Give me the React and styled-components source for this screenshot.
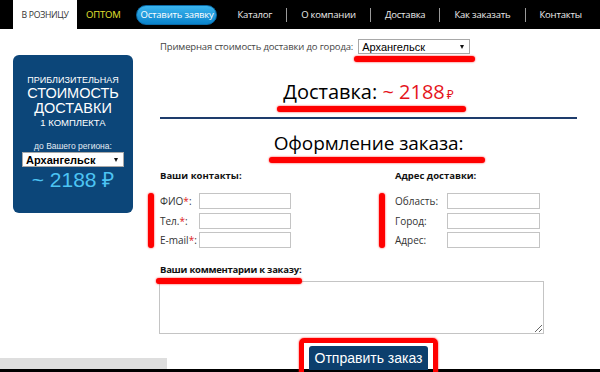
import React from 'react'
import styled, { createGlobalStyle } from 'styled-components'

const GlobalStyle = createGlobalStyle`
  html, body {
    margin: 0;
    padding: 0;
    background: #fff;
    font-family: "Open Sans", "Noto Sans", sans-serif;
    overflow: hidden;
  }
  * { box-sizing: border-box; }
`

const Nav = styled.nav`
  display: flex;
  align-items: center;
  height: 29px;
  padding-left: 13px;
  background: #000;
  font-size: 9.5px;
  letter-spacing: -0.2px;
  color: #ececec;
  white-space: nowrap;
`

const Tab = styled.div`
  align-self: stretch;
  display: flex;
  align-items: center;
  justify-content: center;
  width: 64px;
  background: #fff;
  color: #333;
  font-size: 8.7px;
  letter-spacing: -0.3px;
`

const NavLink = styled.span`
  color: ${p => p.$color || '#ececec'};
  margin-left: ${p => p.$gap || 0}px;
`

const PillButton = styled.span`
  display: flex;
  align-items: center;
  justify-content: center;
  width: 81px;
  height: 20px;
  margin-left: 16px;
  margin-right: 20px;
  border-radius: 10px;
  border: 1px solid #0a6aa6;
  background: linear-gradient(#3bb5ee, #0a83cc);
  color: #fff;
`

const Sep = styled.span`
  width: 1px;
  height: 14px;
  margin: 0 14px;
  background: #9a9a9a;
`

const Content = styled.div`
  display: flex;
  height: 340px;
`

const LeftCol = styled.div`
  display: flex;
  flex-direction: column;
  width: 160px;
  flex: none;
`

const Sidebar = styled.div`
  width: 120px;
  height: 158px;
  margin: 26px 0 0 13px;
  padding: 20px 9px 0;
  border-radius: 6px;
  background: #0c4679;
  color: #fff;
  font-family: "Liberation Sans", Arial, sans-serif;
  text-align: center;
`

const SideLine = styled.div`
  font-size: ${p => p.$size}px;
  line-height: ${p => p.$lh}px;
  margin-top: ${p => p.$mt || 0}px;
  color: ${p => p.$color || '#fff'};
  white-space: nowrap;
`

const Select = styled.div`
  display: flex;
  align-items: center;
  justify-content: space-between;
  height: 15px;
  padding: 0 5px 0 3px;
  background: #fff;
  border: 1px solid #a8a8a8;
  color: #000;
  font-family: "Liberation Sans", Arial, sans-serif;
  font-size: 11px;
  letter-spacing: 0;
  font-weight: ${p => (p.$bold ? 700 : 400)};
  text-align: left;
  position: relative;
  &::after {
    content: '';
    border-left: 2.5px solid transparent;
    border-right: 2.5px solid transparent;
    border-top: 4px solid #111;
  }
`

const GrayBar = styled.div`
  margin-top: auto;
  width: 167px;
  height: 11px;
  background: #dedede;
`

const Main = styled.main`
  width: 417px;
  flex: none;
`

const CityRow = styled.div`
  display: flex;
  align-items: center;
  gap: 5px;
  margin-top: 10px;
  font-size: 9.5px;
  letter-spacing: -0.15px;
  color: #444;
`

const CitySelect = styled(Select)`
  width: 112px;
`

const Mark = styled.span`
  position: absolute;
  left: ${p => p.$left}px;
  right: ${p => p.$right}px;
  top: calc(100% + ${p => p.$top}px);
  height: 6px;
  border-radius: 3px;
  background: #ff0000;
  box-shadow: 0 0 2px #ff2020;
`

const VMark = styled.span`
  position: absolute;
  left: ${p => p.$left}px;
  top: 0;
  bottom: 0;
  width: 6px;
  border-radius: 3px;
  background: #ff0000;
  box-shadow: 0 0 2px #ff2020;
`

const Title = styled.h2`
  position: relative;
  width: max-content;
  margin: ${p => p.$mt}px auto 0;
  font-size: ${p => p.$size}px;
  line-height: ${p => p.$lh}px;
  letter-spacing: ${p => p.$ls || 0}px;
  font-weight: 400;
  color: #000;
`

const Red = styled.span`
  color: #e5141c;
`

const Rub = styled.span`
  font-size: 12px;
  line-height: 1;
  margin-left: 2px;
`

const Divider = styled.hr`
  margin: 12px 0 0;
  border: none;
  height: 2px;
  background: #1e3c6c;
`

const Columns = styled.div`
  display: flex;
  margin-top: 14px;
`

const Group = styled.div`
  width: ${p => p.$width}px;
`

const GroupTitle = styled.div`
  position: relative;
  width: max-content;
  font-size: 9.5px;
  letter-spacing: ${p => p.$ls || 0}px;
  line-height: 14px;
  font-weight: 700;
  color: #111;
`

const FieldGrid = styled.div`
  position: relative;
  display: grid;
  grid-template-columns: ${p => p.$label}px ${p => p.$input}px;
  row-gap: 3.5px;
  margin-top: 10px;
  align-items: center;
`

const Label = styled.label`
  font-size: 10px;
  color: #333;
`

const Star = styled.span`
  color: #e02020;
`

const Input = styled.input`
  height: 16px;
  margin: 0;
  padding: 0 3px;
  border: 1px solid #c4c4c4;
  background: #fff;
`

const Comment = styled.textarea`
  display: block;
  width: 385px;
  height: 53px;
  margin: 4px 0 0 -1px;
  border: 1px solid #c4c4c4;
  background: #fff;
`

const SubmitRow = styled.div`
  display: flex;
  justify-content: center;
  margin-top: 4px;
`

const SubmitFrame = styled.div`
  position: relative;
  z-index: 2;
  padding: 3px 5px;
  border: 5px solid #ff0000;
  border-radius: 5px;
  box-shadow: 0 0 2px #ff2020;
`

const Submit = styled.button`
  display: block;
  width: 119px;
  height: 24px;
  padding: 0;
  border: none;
  border-radius: 3px 3px 0 0;
  background: #0c3f6d;
  color: #fff;
  font-family: "Liberation Sans", Arial, sans-serif;
  font-size: 14px;
`

const Footer = styled.footer`
  height: 20px;
  background: #000;
`

const contacts = ['ФИО', 'Тел.', 'E-mail']
const address = ['Область:', 'Город:', 'Адрес:']

export default function App() {
  return (
    <>
      <GlobalStyle />
      <Nav>
        <Tab>В РОЗНИЦУ</Tab>
        <NavLink $color="#e3e330" $gap={9}>ОПТОМ</NavLink>
        <PillButton>Оставить заявку</PillButton>
        <NavLink>Каталог</NavLink>
        <Sep />
        <NavLink>О компании</NavLink>
        <Sep />
        <NavLink>Доставка</NavLink>
        <Sep />
        <NavLink>Как заказать</NavLink>
        <Sep />
        <NavLink>Контакты</NavLink>
      </Nav>
      <Content>
        <LeftCol>
          <Sidebar>
            <SideLine $size={9} $lh={11}>ПРИБЛИЗИТЕЛЬНАЯ</SideLine>
            <SideLine $size={14.5} $lh={15}>СТОИМОСТЬ</SideLine>
            <SideLine $size={14.5} $lh={15}>ДОСТАВКИ</SideLine>
            <SideLine $size={9.5} $lh={12} $mt={1}>1 КОМПЛЕКТА</SideLine>
            <SideLine $size={8.5} $lh={11} $mt={12} $color="#e4ecf4">до Вашего региона:</SideLine>
            <Select $bold>Архангельск</Select>
            <SideLine $size={21} $lh={24} $mt={1} $color="#4dc4f3">~ 2188 ₽</SideLine>
          </Sidebar>
          <GrayBar />
        </LeftCol>
        <Main>
          <CityRow>
            Примерная стоимость доставки до города:
            <CitySelect>
              Архангельск
              <Mark $left={-5} $right={-6} $top={3} />
            </CitySelect>
          </CityRow>
          <Title $mt={25} $size={20} $lh={26}>
            Доставка: <Red>~ 2188<Rub>₽</Rub></Red>
            <Mark $left={-6} $right={-12} $top={1} />
          </Title>
          <Divider />
          <Title $mt={12} $size={19} $lh={24} $ls={-0.1}>
            Оформление заказа:
            <Mark $left={-5} $right={-22} $top={2} />
          </Title>
          <Columns>
            <Group $width={235}>
              <GroupTitle>Ваши контакты:</GroupTitle>
              <FieldGrid $label={39} $input={92}>
                <VMark $left={-12} />
                {contacts.map(name => (
                  <React.Fragment key={name}>
                    <Label>
                      {name}
                      <Star>*</Star>:
                    </Label>
                    <Input />
                  </React.Fragment>
                ))}
              </FieldGrid>
            </Group>
            <Group $width={182}>
              <GroupTitle>Адрес доставки:</GroupTitle>
              <FieldGrid $label={52} $input={93}>
                <VMark $left={-16} />
                {address.map(name => (
                  <React.Fragment key={name}>
                    <Label>{name}</Label>
                    <Input />
                  </React.Fragment>
                ))}
              </FieldGrid>
            </Group>
          </Columns>
          <GroupTitle $ls={-0.25} style={{ marginTop: 15 }}>
            Ваши комментарии к заказу:
            <Mark $left={-4} $right={-1} $top={1} />
          </GroupTitle>
          <Comment />
          <SubmitRow>
            <SubmitFrame>
              <Submit>Отправить заказ</Submit>
            </SubmitFrame>
          </SubmitRow>
        </Main>
      </Content>
      <Footer />
    </>
  )
}
